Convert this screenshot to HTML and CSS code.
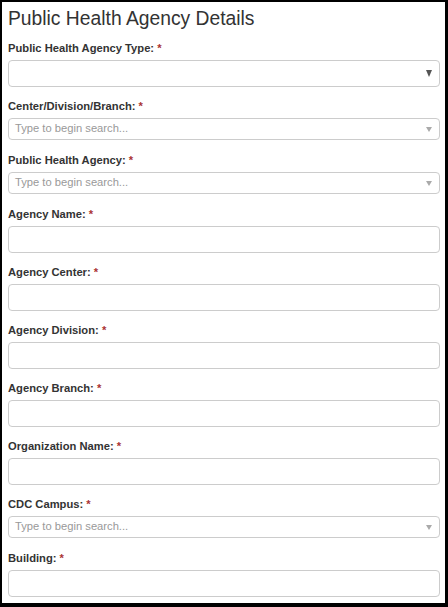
FILE: index.html
```html
<!DOCTYPE html>
<html lang="en">
<head>
<meta charset="utf-8">
<title>Public Health Agency Details</title>
<link rel="stylesheet" href="styles.css">
</head>
<body>
<div class="page">
  <h3 class="title">Public Health Agency Details</h3>

  <div class="group">
    <label class="label">Public Health Agency Type: <span class="req">*</span></label>
    <div class="select"><span class="caret-dark"></span></div>
  </div>

  <div class="group">
    <label class="label">Center/Division/Branch: <span class="req">*</span></label>
    <div class="search"><span class="ph">Type to begin search...</span><span class="caret-light"></span></div>
  </div>

  <div class="group">
    <label class="label">Public Health Agency: <span class="req">*</span></label>
    <div class="search"><span class="ph">Type to begin search...</span><span class="caret-light"></span></div>
  </div>

  <div class="group">
    <label class="label">Agency Name: <span class="req">*</span></label>
    <input class="input" type="text">
  </div>

  <div class="group">
    <label class="label">Agency Center: <span class="req">*</span></label>
    <input class="input" type="text">
  </div>

  <div class="group">
    <label class="label">Agency Division: <span class="req">*</span></label>
    <input class="input" type="text">
  </div>

  <div class="group">
    <label class="label">Agency Branch: <span class="req">*</span></label>
    <input class="input" type="text">
  </div>

  <div class="group">
    <label class="label">Organization Name: <span class="req">*</span></label>
    <input class="input" type="text">
  </div>

  <div class="group">
    <label class="label">CDC Campus: <span class="req">*</span></label>
    <div class="search"><span class="ph">Type to begin search...</span><span class="caret-light"></span></div>
  </div>

  <div class="group">
    <label class="label">Building: <span class="req">*</span></label>
    <input class="input" type="text">
  </div>
</div>
</body>
</html>
```

FILE: styles.css
```css
* { box-sizing: border-box; }

html, body {
  margin: 0;
  padding: 0;
  background: #000;
}

.page {
  width: 448px;
  height: 607px;
  overflow: hidden;
  background: #fff;
  border-style: solid;
  border-color: #000;
  border-width: 2px 3px 4px 2px;
  padding: 6px 5px 0 6px;
  font-family: "Liberation Sans", Arial, sans-serif;
  color: #333;
}

.title {
  margin: 0 0 10px;
  font-size: 19.3px;
  line-height: 22px;
  font-weight: normal;
  color: #333;
}

.group {
  display: flex;
  flex-direction: column;
  margin-bottom: 11px;
}

.label {
  font-size: 11.2px;
  line-height: 17px;
  font-weight: bold;
  margin-bottom: 3px;
  color: #333;
}

.req {
  color: #a33;
}

.select,
.search,
.input {
  width: 100%;
  border: 1px solid #ccc;
  border-radius: 4px;
  background: #fff;
  display: flex;
  align-items: center;
  justify-content: space-between;
}

.select { height: 27px; padding: 0 7px 0 6px; justify-content: flex-end; }

.search { height: 22px; padding: 0 7px 0 6px; margin-bottom: 1px; }

.input {
  height: 27px;
  padding: 0 6px;
  font: inherit;
  font-size: 12px;
  outline: none;
}

.ph {
  font-size: 11.2px;
  color: #999;
  line-height: 1;
}

.caret-dark {
  width: 0;
  height: 0;
  border-left: 3.5px solid transparent;
  border-right: 3.5px solid transparent;
  border-top: 7px solid #555;
}

.caret-light {
  width: 0;
  height: 0;
  border-left: 3px solid transparent;
  border-right: 3px solid transparent;
  border-top: 5px solid #aaa;
}
```
